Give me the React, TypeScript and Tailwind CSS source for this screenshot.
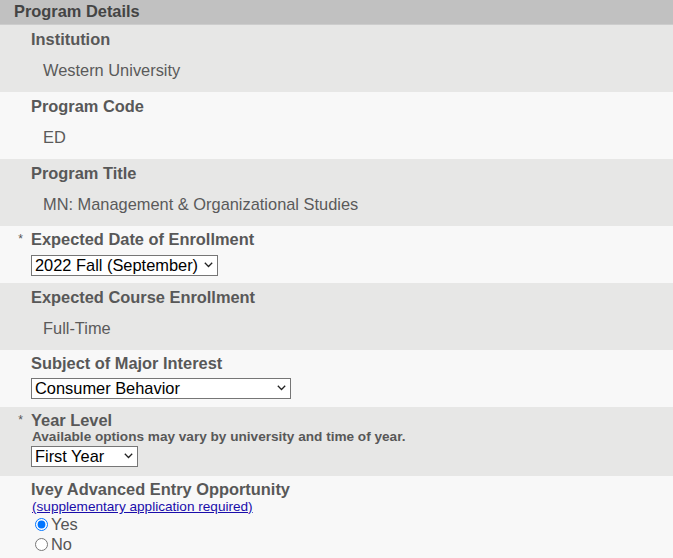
import React from "react";

const font = { fontFamily: '"Liberation Sans", Arial, sans-serif' };

// little chevron used by the selects
function Chevron() {
  return (
    <svg
      width="9"
      height="6"
      viewBox="0 0 9 6"
      className="pointer-events-none absolute right-[5px] top-[8px]"
    >
      <path d="M0.8 0.8 L4.5 4.5 L8.2 0.8" fill="none" stroke="#222" strokeWidth="1.3" />
    </svg>
  );
}

function Select({ value, width }: { value: string; width: string }) {
  return (
    <div className={`relative h-[21px] ${width}`}>
      <select
        defaultValue={value}
        className="h-full w-full appearance-none border border-[#767676] bg-white pl-[3px] text-[16.4px] leading-[19px] text-black outline-none"
      >
        <option>{value}</option>
      </select>
      <Chevron />
    </div>
  );
}

function Label({ text, required }: { text: string; required?: boolean }) {
  return (
    <div className="flex h-[18px] items-center">
      <span className="w-[31px] pr-[8px] text-right text-[12px] leading-[18px] text-[#555]">
        {required ? "*" : ""}
      </span>
      <span className="text-[16.4px] font-bold leading-[18px] text-[#585858]">{text}</span>
    </div>
  );
}

function ReadOnlyRow({ label, value, grey }: { label: string; value: string; grey?: boolean }) {
  return (
    <div className={`${grey ? "bg-[#e7e7e6]" : "bg-[#f8f8f8]"} pt-[5px] pb-[13px]`}>
      <Label text={label} />
      <div className="mt-[13px] pl-[43px] text-[16.4px] leading-[18px] text-[#5a5a5a]">{value}</div>
    </div>
  );
}

export default function App() {
  return (
    <div className="w-[673px] h-[558px] overflow-hidden bg-[#f8f8f8]" style={font}>
      <div className="h-[25px] border-b border-[#cdcdcd] bg-[#c1c1c1] pl-[14px] text-[16.4px] font-bold leading-[22px] text-[#444]">
        Program Details
      </div>

      <ReadOnlyRow label="Institution" value="Western University" grey />
      <ReadOnlyRow label="Program Code" value="ED" />
      <ReadOnlyRow label="Program Title" value="MN: Management & Organizational Studies" grey />

      <div className="bg-[#f8f8f8] pt-[4px] pb-[8px]">
        <Label text="Expected Date of Enrollment" required />
        <div className="mt-[6px] pl-[31px]">
          <Select value="2022 Fall (September)" width="w-[187px]" />
        </div>
      </div>

      <ReadOnlyRow label="Expected Course Enrollment" value="Full-Time" grey />

      <div className="bg-[#f8f8f8] pt-[4px] pb-[9px]">
        <Label text="Subject of Major Interest" />
        <div className="mt-[5px] pl-[31px]">
          <Select value="Consumer Behavior" width="w-[260px]" />
        </div>
      </div>

      <div className="bg-[#e7e7e6] pt-[4px] pb-[10px]">
        <Label text="Year Level" required />
        <div className="pl-[32px] text-[13.6px] font-bold leading-[15px] text-[#585858]">
          Available options may vary by university and time of year.
        </div>
        <div className="mt-[1px] pl-[31px]">
          <Select value="First Year" width="w-[107px]" />
        </div>
      </div>

      <div className="bg-[#f8f8f8] pt-[4px]">
        <Label text="Ivey Advanced Entry Opportunity" />
        <div className="mt-[1px] pl-[32px] text-[13.6px] leading-[15px]">
          <a href="#" className="text-[#1a0dab] underline">
            (supplementary application required)
          </a>
        </div>
        <div className="flex flex-col pl-[35px] text-[16.4px] leading-[20px] text-[#555]">
          <label className="flex items-center gap-[3px]">
            <input type="radio" name="ivey" defaultChecked className="m-0 h-[13px] w-[13px] accent-[#0075ff]" />
            Yes
          </label>
          <label className="flex items-center gap-[3px]">
            <input type="radio" name="ivey" className="m-0 h-[13px] w-[13px]" />
            No
          </label>
        </div>
      </div>
    </div>
  );
}
